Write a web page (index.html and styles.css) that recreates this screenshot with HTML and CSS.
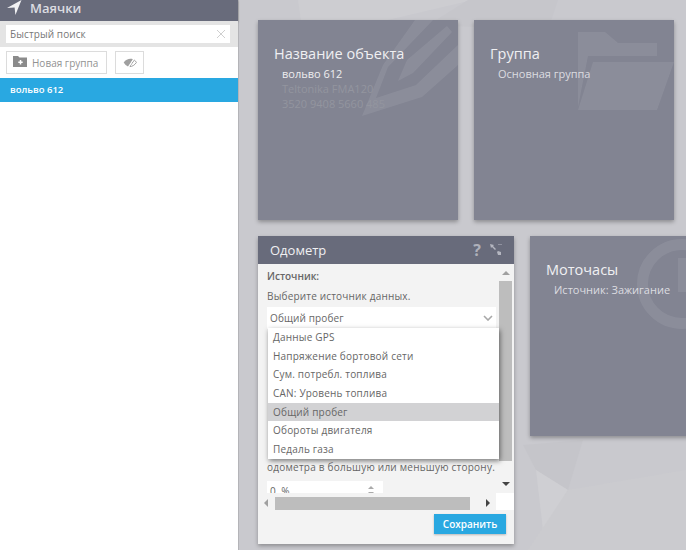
FILE: index.html
```html
<!DOCTYPE html>
<html lang="en">
<head>
  <meta charset="UTF-8" />
  <title>Маячки</title>
  <link rel="stylesheet" href="styles.css">
</head>
<body>
  <aside class="sidebar">
    <div class="side-head">
      <svg class="side-head-icon" viewBox="0 0 15 15"><path d="M14.5 0 L0 8 L7.6 7.4 L8.4 15 Z" fill="#f2f2f4"/></svg>
      <span>Маячки</span>
    </div>
    <div class="search-row">
      <div class="search-box">
        <span>Быстрый поиск</span>
        <svg class="search-clear" viewBox="0 0 10 10"><path d="M1 1 L9 9 M9 1 L1 9" stroke="#cfcfcf" stroke-width="1" fill="none"/></svg>
      </div>
    </div>
    <div class="tool-row">
      <button class="tool-btn">
        <svg class="folder-add" viewBox="0 0 14 11"><path d="M0 0 H5 L6.5 1.5 H14 V11 H0 Z" fill="#8b8b8b"/><path d="M7.5 4 V8.4 M5.3 6.2 H9.7" stroke="#fff" stroke-width="1.5"/></svg>
        Новая группа
      </button>
      <button class="tool-btn eye-btn">
        <svg class="eye" viewBox="0 0 14 11"><path d="M0.7 5.5 C3 2 7 1 10 2.2 L5 9.4 C3.4 8.8 1.8 7.4 0.7 5.5 Z" fill="#a0a0a0"/><path d="M11.4 3 C12.2 3.6 12.9 4.5 13.4 5.5 C11.6 8.2 9.2 9.6 6.6 9.6 Z" fill="none" stroke="#a0a0a0" stroke-width="1"/><path d="M11.5 0.5 L5.5 10.5" stroke="#fff" stroke-width="1"/></svg>
      </button>
    </div>
    <div class="tracker-item">вольво 612</div>
  </aside>

  <main class="main">
    <svg class="backdrop" viewBox="0 0 448 550" preserveAspectRatio="none">
      <polygon points="60,0 235,0 150,20 120,60 70,70" fill="#cdcdd1"/>
      <polygon points="230,0 320,0 310,30 190,25" fill="#c6c6cb"/>
      <polygon points="285,445 345,440 330,490 298,470" fill="#c5c5ca"/>
      <polygon points="298,470 330,490 305,530" fill="#cfcfd3"/>
      <polygon points="330,490 448,470 448,550 290,550" fill="#cbcbcf"/>
    </svg>

    <div class="tile-row">
      <section class="tile">
        <svg class="tile-bg" viewBox="0 0 200 200"><path d="M104 96 L125 45 L157 0 L175 0 L130 47 L118 78 L158 65 L200 25 L200 45 L164 77 Z M140 61 L149 40 L189 6 L194 12 L155 53 Z" fill="#fff" fill-opacity="0.08"/></svg>
        <h2>Название объекта</h2>
        <div class="tile-line strong">вольво 612</div>
        <div class="tile-line faint">Teltonika FMA120</div>
        <div class="tile-line faint">3520 9408 5660 485</div>
      </section>

      <section class="tile">
        <svg class="tile-bg" viewBox="0 0 200 200"><path d="M104 12 H131 L144 23 H183 V36 H114 L104 87 Z M119 42 H200 L183 90 H104 Z" fill="#fff" fill-opacity="0.08"/></svg>
        <h2>Группа</h2>
        <div class="tile-line">Основная группа</div>
      </section>
    </div>

    <div class="tile-row">
      <section class="panel">
        <header class="panel-head">
          <span>Одометр</span>
          <span class="panel-tools">
            <span class="help">?</span>
            <svg class="shrink" viewBox="0 0 12 12"><path d="M0 0 L4 1 L3 2 L6 5 L5 6 L2 3 L1 4 Z M7 8 L8 7 L11 8 V11 H8 Z" fill="#b4b6c0"/><path d="M8 0.5 H12" stroke="#8f919f" stroke-width="1"/></svg>
          </span>
        </header>
        <div class="panel-body">
          <div class="panel-view">
            <div class="panel-content">
              <div class="field-title">Источник:</div>
              <div class="field-hint">Выберите источник данных.</div>
              <div class="select">
                <span>Общий пробег</span>
                <svg class="chevron" viewBox="0 0 10 6"><path d="M1 1 L5 5 L9 1" stroke="#a8a8a8" stroke-width="1.6" fill="none"/></svg>
              </div>
              <div class="under-text">одометра в большую или меньшую сторону.</div>
              <div class="number-input">
                <span class="number-value">0 %</span>
                <span class="spin"><i class="up"></i><i class="down"></i></span>
              </div>
            </div>
            <div class="v-scroll">
              <i class="arrow-up"></i>
              <div class="v-thumb"></div>
              <i class="arrow-down"></i>
            </div>
          </div>
          <div class="h-scroll">
            <i class="arrow-left"></i>
            <div class="h-thumb"></div>
            <i class="arrow-right"></i>
            <div class="scroll-corner"></div>
          </div>
          <ul class="dropdown">
            <li>Данные GPS</li>
            <li>Напряжение бортовой сети</li>
            <li>Сум. потребл. топлива</li>
            <li>CAN: Уровень топлива</li>
            <li class="active">Общий пробег</li>
            <li>Обороты двигателя</li>
            <li>Педаль газа</li>
          </ul>
        </div>
        <footer class="panel-foot">
          <button class="save-btn">Сохранить</button>
        </footer>
      </section>

      <section class="tile">
        <svg class="tile-bg" viewBox="0 0 200 200"><circle cx="152" cy="48" r="39.5" fill="none" stroke="#fff" stroke-opacity="0.08" stroke-width="11"/><path d="M148 22 H160 V56 H148 Z" fill="#fff" fill-opacity="0.08"/></svg>
        <h2>Моточасы</h2>
        <div class="tile-line">Источник: Зажигание</div>
      </section>
    </div>
  </main>
</body>
</html>
```

FILE: styles.css
```css
* {
  box-sizing: border-box;
  margin: 0;
  padding: 0;
}

html, body {
  height: 550px;
  overflow: hidden;
}

body {
  display: flex;
  width: 686px;
  font-family: 'Open Sans', sans-serif;
  background: #c9c9ce;
  color: #555;
}

.sidebar {
  width: 239px;
  height: 550px;
  flex-shrink: 0;
  background: #fff;
  border-right: 1px solid #b4b4b8;
  z-index: 2;
}

.side-head {
  display: flex;
  align-items: flex-start;
  height: 21px;
  padding: 0 0 0 7px;
  overflow: hidden;
  background: #686b7b;
  color: #dcdde2;
  font-size: 13px;
  font-weight: 600;
  line-height: 16px;
  box-shadow: 0 1px 2px rgba(0, 0, 0, 0.3);
}

.side-head-icon {
  width: 15px;
  height: 15px;
  margin-right: 8px;
}

.search-row {
  height: 26px;
  padding: 4px 0 4px 6px;
  background: #e4e4e4;
}

.search-box {
  display: flex;
  align-items: center;
  justify-content: space-between;
  width: 224px;
  height: 18px;
  padding: 0 4px;
  background: #fff;
  font-size: 10px;
  letter-spacing: 0.1px;
  color: #777;
}

.search-clear {
  width: 10px;
  height: 10px;
}

.tool-row {
  display: flex;
  gap: 8px;
  height: 31px;
  padding: 4px 0 0 6px;
  background: #fff;
}

.tool-btn {
  display: flex;
  align-items: center;
  gap: 5px;
  width: 101px;
  height: 23px;
  padding-left: 6px;
  background: #fff;
  border: 1px solid #dcdcdc;
  font-family: inherit;
  font-size: 10px;
  color: #929292;
}

.folder-add {
  width: 14px;
  height: 11px;
  margin-top: -3px;
}

.eye-btn {
  width: 29px;
  padding-left: 7px;
}

.eye {
  width: 14px;
  height: 11px;
}

.tracker-item {
  height: 24px;
  padding-left: 10px;
  background: #29a8e1;
  color: #fff;
  font-size: 9.5px;
  font-weight: 600;
  line-height: 23px;
}

.main {
  position: relative;
  display: flex;
  flex-direction: column;
  gap: 16px;
  width: 447px;
  height: 550px;
  padding: 20px 0 0 19px;
  overflow: hidden;
}

.backdrop {
  position: absolute;
  top: 0;
  left: -1px;
  width: 448px;
  height: 550px;
}

.tile-row {
  position: relative;
  display: flex;
  align-items: flex-start;
  gap: 16px;
  width: 600px;
}

.tile {
  position: relative;
  flex-shrink: 0;
  width: 200px;
  height: 200px;
  padding: 24px 16px;
  overflow: hidden;
  background: #828492;
  color: #fff;
  box-shadow: 0 2px 4px rgba(0, 0, 0, 0.3);
}

.tile-bg {
  position: absolute;
  top: 0;
  left: 0;
  width: 200px;
  height: 200px;
}

.tile h2 {
  position: relative;
  font-size: 14.5px;
  font-weight: 400;
  line-height: 20px;
  color: #f0f0f2;
}

.tile-line {
  position: relative;
  padding-left: 8px;
  font-size: 11px;
  line-height: 15px;
  color: #dcdce0;
}

.tile h2 + .tile-line {
  margin-top: 2px;
}

.tile-line.strong {
  color: #eeeef0;
}

.tile-line.faint {
  color: #93959f;
}

.panel {
  position: relative;
  flex-shrink: 0;
  width: 256px;
  height: 308px;
  background: #f3f3f3;
  box-shadow: 0 2px 4px rgba(0, 0, 0, 0.3);
}

.panel-head {
  display: flex;
  align-items: center;
  justify-content: space-between;
  height: 28px;
  padding: 0 12px;
  background: #686b7b;
  color: #f0f0f2;
  font-size: 13px;
}

.panel-tools {
  display: flex;
  align-items: center;
  gap: 9px;
}

.help {
  font-size: 16px;
  font-weight: 700;
  line-height: 20px;
  color: #aeb0ba;
}

.shrink {
  width: 12px;
  height: 12px;
}

.panel-body {
  position: relative;
}

.panel-view {
  display: flex;
  height: 229px;
}

.panel-content {
  width: 241px;
  height: 229px;
  padding-left: 9px;
  overflow: hidden;
  font-size: 10px;
  color: #666;
}

.field-title {
  padding-top: 4px;
  line-height: 16px;
  font-weight: 600;
}

.field-hint {
  margin-top: 4px;
  line-height: 16px;
  letter-spacing: 0.18px;
}

.select {
  display: flex;
  align-items: center;
  justify-content: space-between;
  width: 229px;
  height: 22px;
  margin-top: 3px;
  padding: 0 3px;
  background: #fff;
  font-size: 10px;
  letter-spacing: 0.12px;
}

.chevron {
  width: 10px;
  height: 6px;
}

.under-text {
  margin-top: 130px;
  line-height: 16px;
  letter-spacing: 0.23px;
  white-space: nowrap;
}

.number-input {
  display: flex;
  justify-content: space-between;
  width: 116px;
  height: 20px;
  margin-top: 6px;
  padding: 3px 3px;
  background: #fff;
}

.number-value {
  word-spacing: 3px;
}

.spin i {
  display: block;
  width: 0;
  height: 0;
  margin: 2px 6px 3px 0;
  border: 3px solid transparent;
  border-top: 0;
  border-bottom: 3px solid #aaa;
}

.spin i.down {
  border-top: 3px solid #aaa;
  border-bottom: 0;
}

.v-scroll {
  display: flex;
  flex-direction: column;
  align-items: center;
  width: 15px;
  margin-left: -1px;
}

.arrow-up, .arrow-down, .arrow-left, .arrow-right {
  display: block;
  width: 0;
  height: 0;
  flex-shrink: 0;
  border: 4px solid transparent;
}

.arrow-up {
  margin-top: 7px;
  border-top: 0;
  border-bottom: 4px solid #a0a0a0;
}

.v-thumb {
  width: 13px;
  height: 180px;
  margin-top: 6px;
  background: #bdbdbd;
}

.arrow-down {
  margin-top: 21px;
  border-bottom: 0;
  border-top: 4px solid #444;
}

.h-scroll {
  display: flex;
  align-items: flex-end;
  height: 17px;
}

.arrow-left {
  margin: 0 0 3px 6px;
  border-left: 0;
  border-right: 4px solid #a0a0a0;
}

.h-thumb {
  width: 195px;
  height: 13px;
  margin-left: 7px;
  background: #bdbdbd;
}

.arrow-right {
  margin: 0 0 3px 16px;
  border-right: 0;
  border-left: 4px solid #444;
}

.scroll-corner {
  width: 18px;
  height: 17px;
  margin-left: 6px;
  background: #fff;
}

.dropdown {
  position: absolute;
  top: 64px;
  left: 10px;
  width: 231px;
  list-style: none;
  background: #fff;
  box-shadow: 1px 2px 5px rgba(0, 0, 0, 0.5);
  font-size: 10px;
  letter-spacing: 0.2px;
  color: #666;
}

.dropdown li {
  height: 18.7px;
  padding-left: 5px;
  line-height: 18.7px;
}

.dropdown li.active {
  background: #d2d2d4;
}

.panel-foot {
  display: flex;
  justify-content: flex-end;
  padding: 4px 8px 0 0;
}

.save-btn {
  width: 72px;
  height: 20px;
  background: #29a8e1;
  border: none;
  box-shadow: 0 1px 2px rgba(0, 0, 0, 0.25);
  color: #fff;
  font-family: inherit;
  font-size: 10px;
  font-weight: 600;
}
```
